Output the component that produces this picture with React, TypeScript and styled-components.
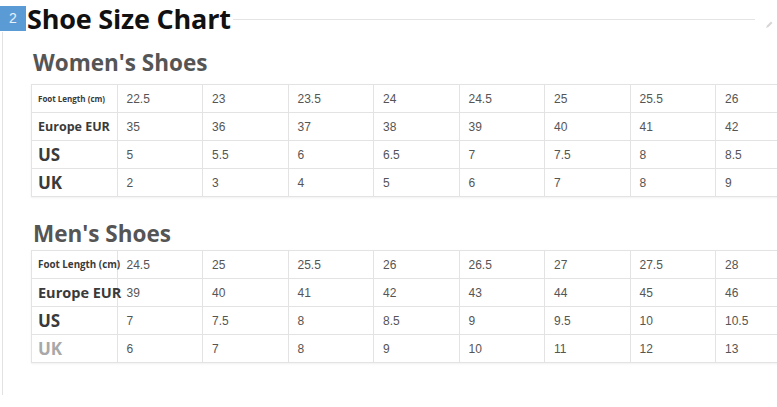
import styled, { createGlobalStyle } from 'styled-components'

const GlobalStyle = createGlobalStyle`
  html, body {
    margin: 0;
    padding: 0;
    background: #fff;
    overflow: hidden;
  }
  body {
    font-family: "Open Sans", "Noto Sans", sans-serif;
  }
`

type Chart = {
  title: string
  gap: number
  rows: { label: string; size: number; tone?: string; values: string[] }[]
}

const women: Chart = {
  title: "Women's Shoes",
  gap: 6,
  rows: [
    { label: 'Foot Length (cm)', size: 8, values: ['22.5', '23', '23.5', '24', '24.5', '25', '25.5', '26'] },
    { label: 'Europe EUR', size: 12.5, values: ['35', '36', '37', '38', '39', '40', '41', '42'] },
    { label: 'US', size: 17, values: ['5', '5.5', '6', '6.5', '7', '7.5', '8', '8.5'] },
    { label: 'UK', size: 17, values: ['2', '3', '4', '5', '6', '7', '8', '9'] },
  ],
}

const men: Chart = {
  title: "Men's Shoes",
  gap: 1,
  rows: [
    { label: 'Foot Length (cm)', size: 9.8, values: ['24.5', '25', '25.5', '26', '26.5', '27', '27.5', '28'] },
    { label: 'Europe EUR', size: 14.5, values: ['39', '40', '41', '42', '43', '44', '45', '46'] },
    { label: 'US', size: 17, values: ['7', '7.5', '8', '8.5', '9', '9.5', '10', '10.5'] },
    { label: 'UK', size: 17, tone: '#a8a8a8', values: ['6', '7', '8', '9', '10', '11', '12', '13'] },
  ],
}

const App = () => {
  return (
    <>
      <GlobalStyle />
      <Page>
        <Header>
          <Badge>2</Badge>
          <Title>Shoe Size Chart</Title>
          <Rule />
          <EditMark viewBox="0 0 10 10">
            <path d="M2 8 L3 5.5 L7 1.5 L8.5 3 L4.5 7 Z" fill="#d6d6d6" />
          </EditMark>
        </Header>
        <Frame>
          {[women, men].map((chart) => (
            <Section key={chart.title}>
              <Heading $gap={chart.gap}>{chart.title}</Heading>
              <SizeTable>
                <colgroup>
                  {Array.from({ length: 9 }).map((_, i) => (
                    <col key={i} style={{ width: 85.5 }} />
                  ))}
                </colgroup>
                <tbody>
                  {chart.rows.map((row) => (
                    <tr key={row.label}>
                      <LabelCell $size={row.size} $tone={row.tone}>{row.label}</LabelCell>
                      {row.values.map((v, i) => (
                        <ValueCell key={i}>{v}</ValueCell>
                      ))}
                    </tr>
                  ))}
                </tbody>
              </SizeTable>
            </Section>
          ))}
        </Frame>
      </Page>
    </>
  )
}

const Page = styled.div`
  width: 777px;
  height: 407px;
`

const Header = styled.div`
  display: flex;
  align-items: flex-start;
  height: 32px;
  padding-top: 6px;
  box-sizing: border-box;
`

const Badge = styled.div`
  width: 26px;
  height: 25px;
  background: #5b9bd5;
  color: #e8f1fb;
  font-family: "Liberation Sans", Arial, sans-serif;
  font-size: 14px;
  line-height: 25px;
  text-align: center;
  flex: none;
`

const Title = styled.h1`
  margin: -5px 0 0 1px;
  font-size: 27px;
  line-height: 36px;
  font-weight: 700;
  color: #111;
  letter-spacing: -0.2px;
  flex: none;
`

const Rule = styled.div`
  flex: 1;
  height: 1px;
  background: #e4e4e4;
  margin: 13px 0 0 2px;
`

const EditMark = styled.svg`
  width: 10px;
  height: 10px;
  margin: 14px 3px 0 9px;
  flex: none;
`

const Frame = styled.div`
  margin-left: 2px;
  border-left: 1px solid #e2e2e2;
  height: 363px;
  padding-left: 28px;
  padding-top: 16px;
  box-sizing: border-box;
`

const Section = styled.section`
  & + & {
    margin-top: 22px;
  }
`

const Heading = styled.h2<{ $gap: number }>`
  margin: 0 0 ${(p) => p.$gap}px 2px;
  font-size: 22.5px;
  line-height: 30px;
  font-weight: 700;
  color: #555;
`

const SizeTable = styled.table`
  border-collapse: collapse;
  table-layout: fixed;
  width: 770px;
  box-shadow: 0 1px 2px rgba(0, 0, 0, 0.06);

  tr {
    height: 28px;
  }

  td {
    border: 1px solid #e3e3e3;
    padding: 0;
    vertical-align: middle;
    white-space: nowrap;
    overflow: visible;
  }
`

const LabelCell = styled.td<{ $size: number; $tone?: string }>`
  padding-left: 6px !important;
  font-size: ${(p) => p.$size}px;
  font-weight: 700;
  color: ${(p) => p.$tone || '#3a3a3a'};
`

const ValueCell = styled.td`
  padding-left: 9px !important;
  font-family: "Liberation Sans", Arial, sans-serif;
  font-size: 12px;
  color: #555;
`

export default App
